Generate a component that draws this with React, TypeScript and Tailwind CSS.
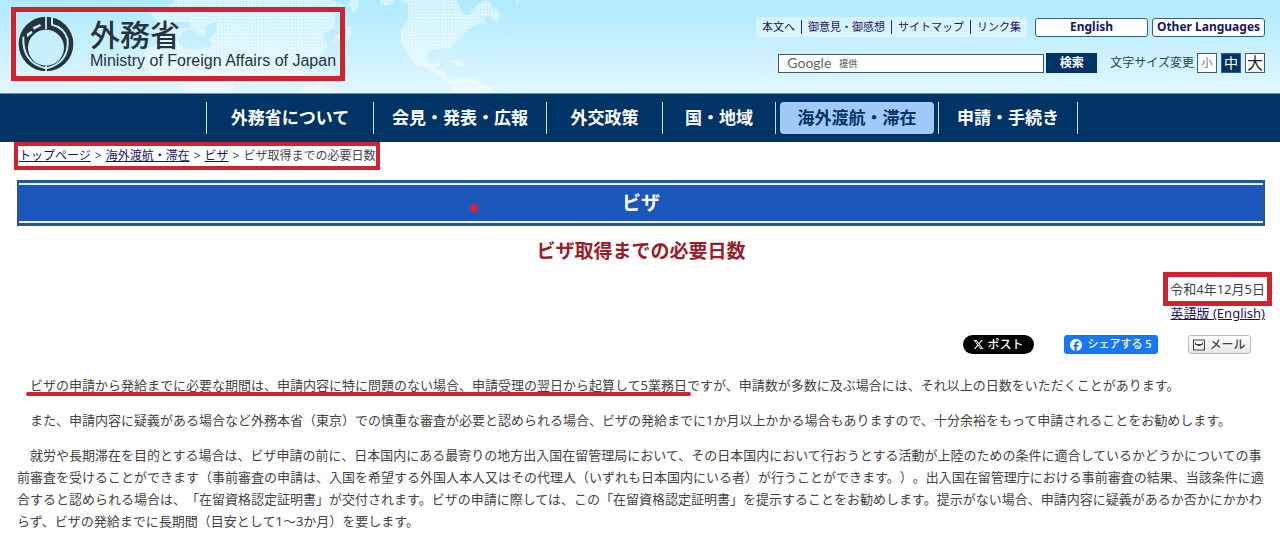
import React, { useState } from "react";
import { FaFacebook, FaXTwitter } from "react-icons/fa6";

const utilityLinks = ["本文へ", "御意見・御感想", "サイトマップ", "リンク集"];

const navItems = [
  { label: "外務省について", width: "w-[167px]" },
  { label: "会見・発表・広報", width: "w-[173px]" },
  { label: "外交政策", width: "w-[116px]" },
  { label: "国・地域", width: "w-[113px]" },
  { label: "海外渡航・滞在", width: "w-[163px]", active: true },
  { label: "申請・手続き", width: "w-[140px]" },
];

const breadcrumbs = ["トップページ", "海外渡航・滞在", "ビザ"];

const textSizes = [
  { label: "小", className: "text-[11px] text-gray-500" },
  { label: "中", className: "text-sm" },
  { label: "大", className: "text-base text-[#222]" },
];

/** Dotted world map behind the header */
const WorldMap: React.FC = () => (
  <svg
    className="absolute left-0 top-0 h-full w-[520px]"
    viewBox="0 0 520 94"
    preserveAspectRatio="xMinYMin slice"
    aria-hidden="true"
  >
    <defs>
      <pattern id="dots" width="3.34" height="3.34" patternUnits="userSpaceOnUse">
        <rect width="3.34" height="3.34" fill="#fff" fillOpacity="0.25" />
        <rect width="2.5" height="2.5" fill="#fff" fillOpacity="0.45" />
      </pattern>
    </defs>
    <g fill="url(#dots)">
      {/* Eurasia, Africa */}
      <path
        fillRule="evenodd"
        d="M150 12L168 6L176 0H330L342 4L345 10L335 14V28L322 34L328 46L316 60L300 66L304 76L270 78L236 82L232 92H186L178 80L154 76L140 64L146 50L160 42L150 34L158 24ZM182 32L192 28L198 34L206 36V26L216 22V32L210 38L212 46L198 50L184 48L178 42ZM172 22H190V28H172Z"
      />
      {/* Japan, Kamchatka, Australia */}
      <path d="M350 0H359V5L355 12H351V7H348ZM342 26H350L352 32L348 40H338L332 43L334 36L341 33ZM302 86L310 82L316 85L320 80L328 86L332 94H300Z" />
      {/* Alaska, North America */}
      <path d="M380 0H395L392 4L384 6L380 4ZM400 0H457L460 8L465 15H470L474 8L478 4L486 0L491 3V7L498 10L500 13L498 22L492 20L489 16L483 18L487 24H477L467 31L459 39L452 46V52L449 48L428 50L427 58L430 63H436L440 60L441 64L437 68L444 72L447 80L441 79L434 72L426 68L416 65L409 57L405 50L401 40V30L408 20V5Z" />
      {/* Caribbean, South America */}
      <path d="M451 60H458L465 64L460 66L452 63ZM448 80L456 78H470L478 81L487 86L494 90V94H452L450 86ZM516 0H519V3H516Z" />
    </g>
  </svg>
);

const Emblem: React.FC = () => (
  <svg className="size-[56px]" viewBox="22 26 168 168" aria-hidden="true">
    <circle cx="106" cy="110" r="82" fill="#26343c" />
    <path
      d="M38 88Q34 166 105 183M124 28V52Q160 60 171 96Q176 166 107 183"
      fill="none"
      stroke="#bdeefc"
      strokeWidth="6"
    />
    <circle cx="106" cy="121" r="54" fill="#c4effb" />
    <path d="M106 26V66M106 176V194" stroke="#d6f4fd" strokeWidth="5" />
    <path d="M66 60L88 50L91 56L70 67ZM48 80L62 70L66 76L50 90Z" fill="#c4effb" />
  </svg>
);

const MailIcon: React.FC = () => (
  <svg className="size-[12px]" viewBox="0 0 12 12" fill="none" stroke="#444" aria-hidden="true">
    <rect x="0.5" y="1" width="11" height="10" />
    <path d="M2.5 3.5v2h7v-2M4.5 5.5v1h3v-1" />
  </svg>
);

const Header: React.FC = () => {
  const [query, setQuery] = useState("");
  const [size, setSize] = useState("中");

  return (
    <header className="relative border-b border-[#6f95b5] bg-linear-to-b from-[#aeeaff] to-[#e1f7fe]">
      <WorldMap />
      <div className="relative flex items-start justify-between pb-3 pl-[11px] pr-[15px] pt-[7px]">
        <a
          href="#top"
          className="flex h-[74px] items-center gap-4 border-5 border-[#d1232f] pl-[2px] pr-1 text-[#26343c]"
        >
          <Emblem />
          <span className="block">
            <span className="block text-[30px] font-medium leading-[34px]">外務省</span>
            <span className="block font-['Liberation_Sans',Arial,sans-serif] text-base leading-[18px]">
              Ministry of Foreign Affairs of Japan
            </span>
          </span>
        </a>

        <div className="flex flex-col items-end gap-4 pt-[10px]">
          <div className="flex items-center gap-1">
            <ul className="mr-1 flex h-5 items-center bg-white/40 text-[11px] text-[#1b1464]">
              {utilityLinks.map((label, i) => (
                <li
                  key={label}
                  className={
                    i > 0
                      ? "border-l border-[#234] px-[6px] leading-[14px]"
                      : "px-[6px] leading-[14px]"
                  }
                >
                  <a href="#top">{label}</a>
                </li>
              ))}
            </ul>
            <a
              href="#english"
              className="flex h-[19px] w-[113px] items-center justify-center rounded-[3px] border border-[#355f80] bg-white text-xs font-bold text-[#1b1464]"
            >
              English
            </a>
            <a
              href="#languages"
              className="flex h-[19px] w-[113px] items-center justify-center rounded-[3px] border border-[#355f80] bg-white text-xs font-bold text-[#1b1464]"
            >
              Other Languages
            </a>
          </div>

          <div className="flex items-center">
            <form className="flex items-center gap-[2px]" onSubmit={(e) => e.preventDefault()}>
              <div className="relative">
                <input
                  id="search"
                  type="text"
                  value={query}
                  onChange={(e) => setQuery(e.target.value)}
                  className="block h-[19px] w-[266px] border border-[#456] bg-white px-2 text-xs"
                />
                <label
                  htmlFor="search"
                  className={
                    query
                      ? "sr-only"
                      : "absolute inset-y-0 left-[9px] flex items-center gap-2 text-[#666]"
                  }
                >
                  <span className="font-[Lato,sans-serif] text-sm leading-none">Google</span>
                  <span className="text-[9px] font-medium leading-none">提供</span>
                </label>
              </div>
              <button
                type="submit"
                className="h-5 w-[51px] bg-[#003366] text-xs font-bold leading-5 text-white"
              >
                検索
              </button>
            </form>
            <span className="ml-[13px] mr-[3px] text-xs text-[#246]">文字サイズ変更</span>
            <div className="flex gap-1">
              {textSizes.map((item) => (
                <button
                  key={item.label}
                  type="button"
                  onClick={() => setSize(item.label)}
                  className={`flex size-5 items-center justify-center border border-[#355f80] ${item.className} ${
                    size === item.label ? "bg-[#003366] text-white" : "bg-white"
                  }`}
                >
                  {item.label}
                </button>
              ))}
            </div>
          </div>
        </div>
      </div>
    </header>
  );
};

const GlobalNav: React.FC = () => (
  <nav className="bg-[#003366] py-2">
    <ul className="flex justify-center pl-1">
      {navItems.map((item) => (
        <li
          key={item.label}
          className={`${item.width} border-l border-[#c9e3f0] px-1 last:border-r`}
        >
          <a
            href="#nav"
            className={`flex h-8 items-center justify-center whitespace-nowrap rounded-[4px] text-[17px] font-bold ${
              item.active ? "bg-[#9fcaf6] text-[#003366]" : "text-white"
            }`}
          >
            {item.label}
          </a>
        </li>
      ))}
    </ul>
  </nav>
);

const ShareButtons: React.FC = () => (
  <div className="flex items-center justify-end gap-[30px] pr-[14px] text-xs">
    <button
      type="button"
      className="flex h-[19px] w-[71px] items-center justify-center gap-[3px] rounded-full bg-black font-medium text-white"
    >
      <FaXTwitter className="size-[11px]" />
      ポスト
    </button>
    <button
      type="button"
      className="flex h-[19px] w-[94px] items-center justify-center gap-[5px] rounded-[3px] bg-[#1877f2] text-[11px] font-medium text-white"
    >
      <FaFacebook className="size-[12px]" />
      <span>シェアする 5</span>
    </button>
    <button
      type="button"
      className="flex h-[19px] w-[63px] items-center justify-center gap-1 rounded-[3px] border border-[#bbb] bg-linear-to-b from-white to-[#e8e8e8] font-medium text-[#444]"
    >
      <MailIcon />
      メール
    </button>
  </div>
);

const App: React.FC = () => {
  return (
    <div
      id="top"
      lang="ja"
      className="bg-white font-['Noto_Sans','Noto_Sans_CJK_JP',sans-serif] text-[13px] leading-[22px] text-[#444]"
    >
      <Header />
      <GlobalNav />

      <main className="pl-[17px] pr-[15px]">
        <nav className="-ml-[3px] flex">
          <ol className="flex h-[28px] items-center gap-1 border-4 border-[#d1232f] px-px text-xs">
            {breadcrumbs.map((label) => (
              <li key={label} className="flex gap-1">
                <a href="#top" className="text-[#1b1464] underline">
                  {label}
                </a>
                <span>&gt;</span>
              </li>
            ))}
            <li>ビザ取得までの必要日数</li>
          </ol>
        </nav>

        <div className="relative mt-[10px] border-2 border-[#2c5590] bg-[#1a56bb] py-px">
          <p className="border-y-2 border-[#e6f8ff] text-center text-[19px] font-bold leading-9 text-white">
            ビザ
          </p>
          <span className="absolute left-[451px] top-[22px] size-2 rounded-full bg-[#e0202e]" />
        </div>

        <h1 className="mt-[11px] text-center text-[19px] font-bold leading-7 text-[#99202a]">
          ビザ取得までの必要日数
        </h1>

        <div className="mt-3 flex flex-col items-end leading-6">
          <time
            dateTime="2022-12-05"
            className="my-[2px] block leading-5 outline-5 outline-offset-2 outline-[#d1232f]"
          >
            令和4年12月5日
          </time>
          <a href="#english" className="text-[#1b1464] underline">
            英語版 (English)
          </a>
        </div>

        <div className="mt-[10px]">
          <ShareButtons />
        </div>

        <div className="mt-5 space-y-[13px] indent-[13px] [text-spacing-trim:space-all]">
          <p>
            <span className="relative">
              ビザの申請から発給までに必要な期間は、申請内容に特に問題のない場合、申請受理の翌日から起算して5業務日
              <span className="absolute -bottom-[2px] -left-1 -right-1 h-1 rounded-full bg-[#d1232f]" />
            </span>
            ですが、申請数が多数に及ぶ場合には、それ以上の日数をいただくことがあります。
          </p>
          <p>
            また、申請内容に疑義がある場合など外務本省（東京）での慎重な審査が必要と認められる場合、ビザの発給までに1か月以上かかる場合もありますので、十分余裕をもって申請されることをお勧めします。
          </p>
          <p>
            就労や長期滞在を目的とする場合は、ビザ申請の前に、日本国内にある最寄りの地方出入国在留管理局において、その日本国内において行おうとする活動が上陸のための条件に適合しているかどうかについての事前審査を受けることができます（事前審査の申請は、入国を希望する外国人本人又はその代理人（いずれも日本国内にいる者）が行うことができます。）。出入国在留管理庁における事前審査の結果、当該条件に適合すると認められる場合は、「在留資格認定証明書」が交付されます。ビザの申請に際しては、この「在留資格認定証明書」を提示することをお勧めします。提示がない場合、申請内容に疑義があるか否かにかかわらず、ビザの発給までに長期間（目安として1～3か月）を要します。
          </p>
        </div>
      </main>
    </div>
  );
};

export default App;
